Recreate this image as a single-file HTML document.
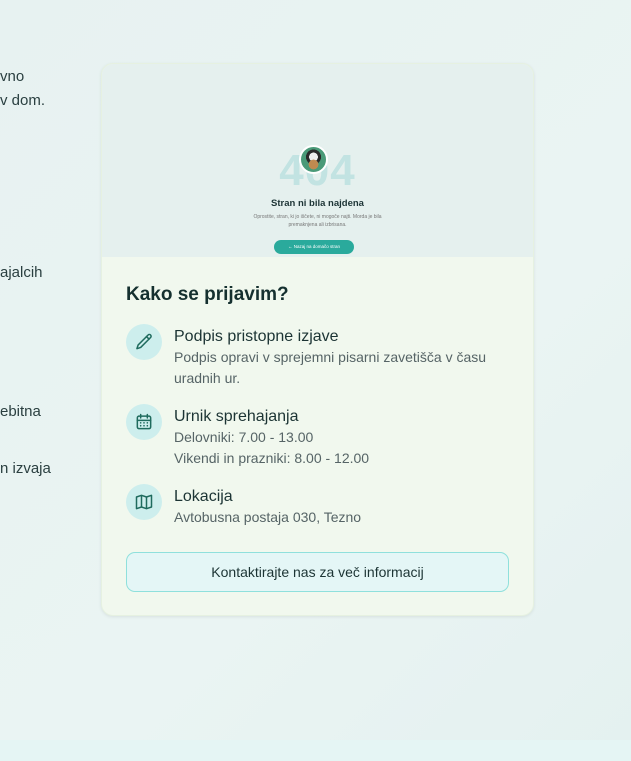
<!DOCTYPE html>
<html><head><meta charset="utf-8"><style>
*{margin:0;padding:0;box-sizing:border-box}
body{width:631px;height:761px;overflow:hidden;background:linear-gradient(135deg,#e7f2f1,#eaf4f3 60%,#e4f1f0);font-family:"Liberation Sans",sans-serif;color:#1f3a3a;position:relative}
.lt{position:absolute;left:0;font-size:15px;color:#2a3f40;white-space:nowrap}
.card{position:absolute;left:101px;top:63px;width:433px;height:553px;border-radius:12px;background:#f1f8ee;box-shadow:0 1px 3px rgba(0,0,0,.08);border:1px solid #e6f1e1;overflow:hidden}
.img{height:193px;background:#e5f0ee;position:relative;text-align:center}
.f04{position:absolute;left:0;right:0;top:82px;font-size:44px;font-weight:bold;color:#c2e3e2;letter-spacing:1px}
.cat{position:absolute;left:197px;top:81px;width:29px;height:29px;border-radius:50%;background:radial-gradient(circle at 50% 70%,#c08a50 0 22%,transparent 23%),radial-gradient(circle at 50% 40%,#eee 0 22%,#2a2a2a 23% 38%,#4a9a78 39%);border:2px solid #fff}
.t1{position:absolute;left:0;right:0;top:134px;font-size:9.5px;font-weight:bold;color:#1d3436}
.t2{position:absolute;left:0;right:0;top:150px;font-size:5px;color:#777;line-height:7.5px}
.btn1{position:absolute;left:172px;top:176px;width:80px;height:14px;border-radius:7px;background:#2aaa9c;color:#fff;font-size:4.5px;line-height:14px}
.body{padding:26px 24px}
h2{font-size:19px;font-weight:bold;color:#15302f;margin-top:1px;margin-bottom:20px}
.it{display:flex;margin-bottom:17px}
.ic{width:36px;height:36px;border-radius:50%;background:#cdeeed;flex:none;display:flex;align-items:center;justify-content:center;margin-right:12px;margin-top:-2px}
.it b{display:block;font-weight:normal;font-size:16px;color:#1c3434;line-height:21px}
.it p{font-size:14px;color:#566466;line-height:21px}
.cb{margin-top:24px;height:40px;border:1px solid #8fe0dc;border-radius:9px;background:#e4f6f6;text-align:center;line-height:38px;font-size:14px;color:#1c3434}
</style></head><body>
<div class="lt" style="top:68px">vno</div>
<div class="lt" style="top:92px">v dom.</div>
<div class="lt" style="top:264px">ajalcih</div>
<div class="lt" style="top:403px">ebitna</div>
<div class="lt" style="top:460px">n izvaja</div>
<div class="card">
<div class="img"><div class="f04">404</div><div class="cat"></div>
<div class="t1">Stran ni bila najdena</div>
<div class="t2">Oprostite, stran, ki jo iščete, ni mogoče najti. Morda je bila<br>premaknjena ali izbrisana.</div>
<div class="btn1">← Nazaj na domačo stran</div></div>
<div class="body">
<h2>Kako se prijavim?</h2>
<div class="it"><div class="ic"><svg width="20" height="20" viewBox="0 0 24 24" fill="none" stroke="#1f6b5e" stroke-width="1.8" stroke-linecap="round" stroke-linejoin="round"><path d="M16.9 3.6a2.1 2.1 0 013 3L8 18.5 3.5 20l1.5-4.5z"/><path d="M15 5.5l3 3"/></svg></div><div><b>Podpis pristopne izjave</b><p>Podpis opravi v sprejemni pisarni zavetišča v času uradnih ur.</p></div></div>
<div class="it"><div class="ic"><svg width="20" height="20" viewBox="0 0 24 24" fill="none" stroke="#1f6b5e" stroke-width="1.8" stroke-linecap="round"><rect x="4" y="5" width="16" height="15" rx="2"/><path d="M8 3v4M16 3v4M4 10h16"/><path d="M8 13h.01M12 13h.01M16 13h.01M8 16.5h.01M12 16.5h.01M16 16.5h.01" stroke-width="2"/></svg></div><div><b>Urnik sprehajanja</b><p>Delovniki: 7.00 - 13.00<br>Vikendi in prazniki: 8.00 - 12.00</p></div></div>
<div class="it"><div class="ic"><svg width="20" height="20" viewBox="0 0 24 24" fill="none" stroke="#1f6b5e" stroke-width="1.8" stroke-linejoin="round"><path d="M3 6l6-2 6 2 6-2v14l-6 2-6-2-6 2z"/><path d="M9 4v14M15 6v14"/></svg></div><div><b>Lokacija</b><p>Avtobusna postaja 030, Tezno</p></div></div>
<div class="cb">Kontaktirajte nas za več informacij</div>
</div></div>
<div style="position:absolute;left:0;right:0;top:740px;height:21px;background:#e5f5f4"></div>
</body></html>
